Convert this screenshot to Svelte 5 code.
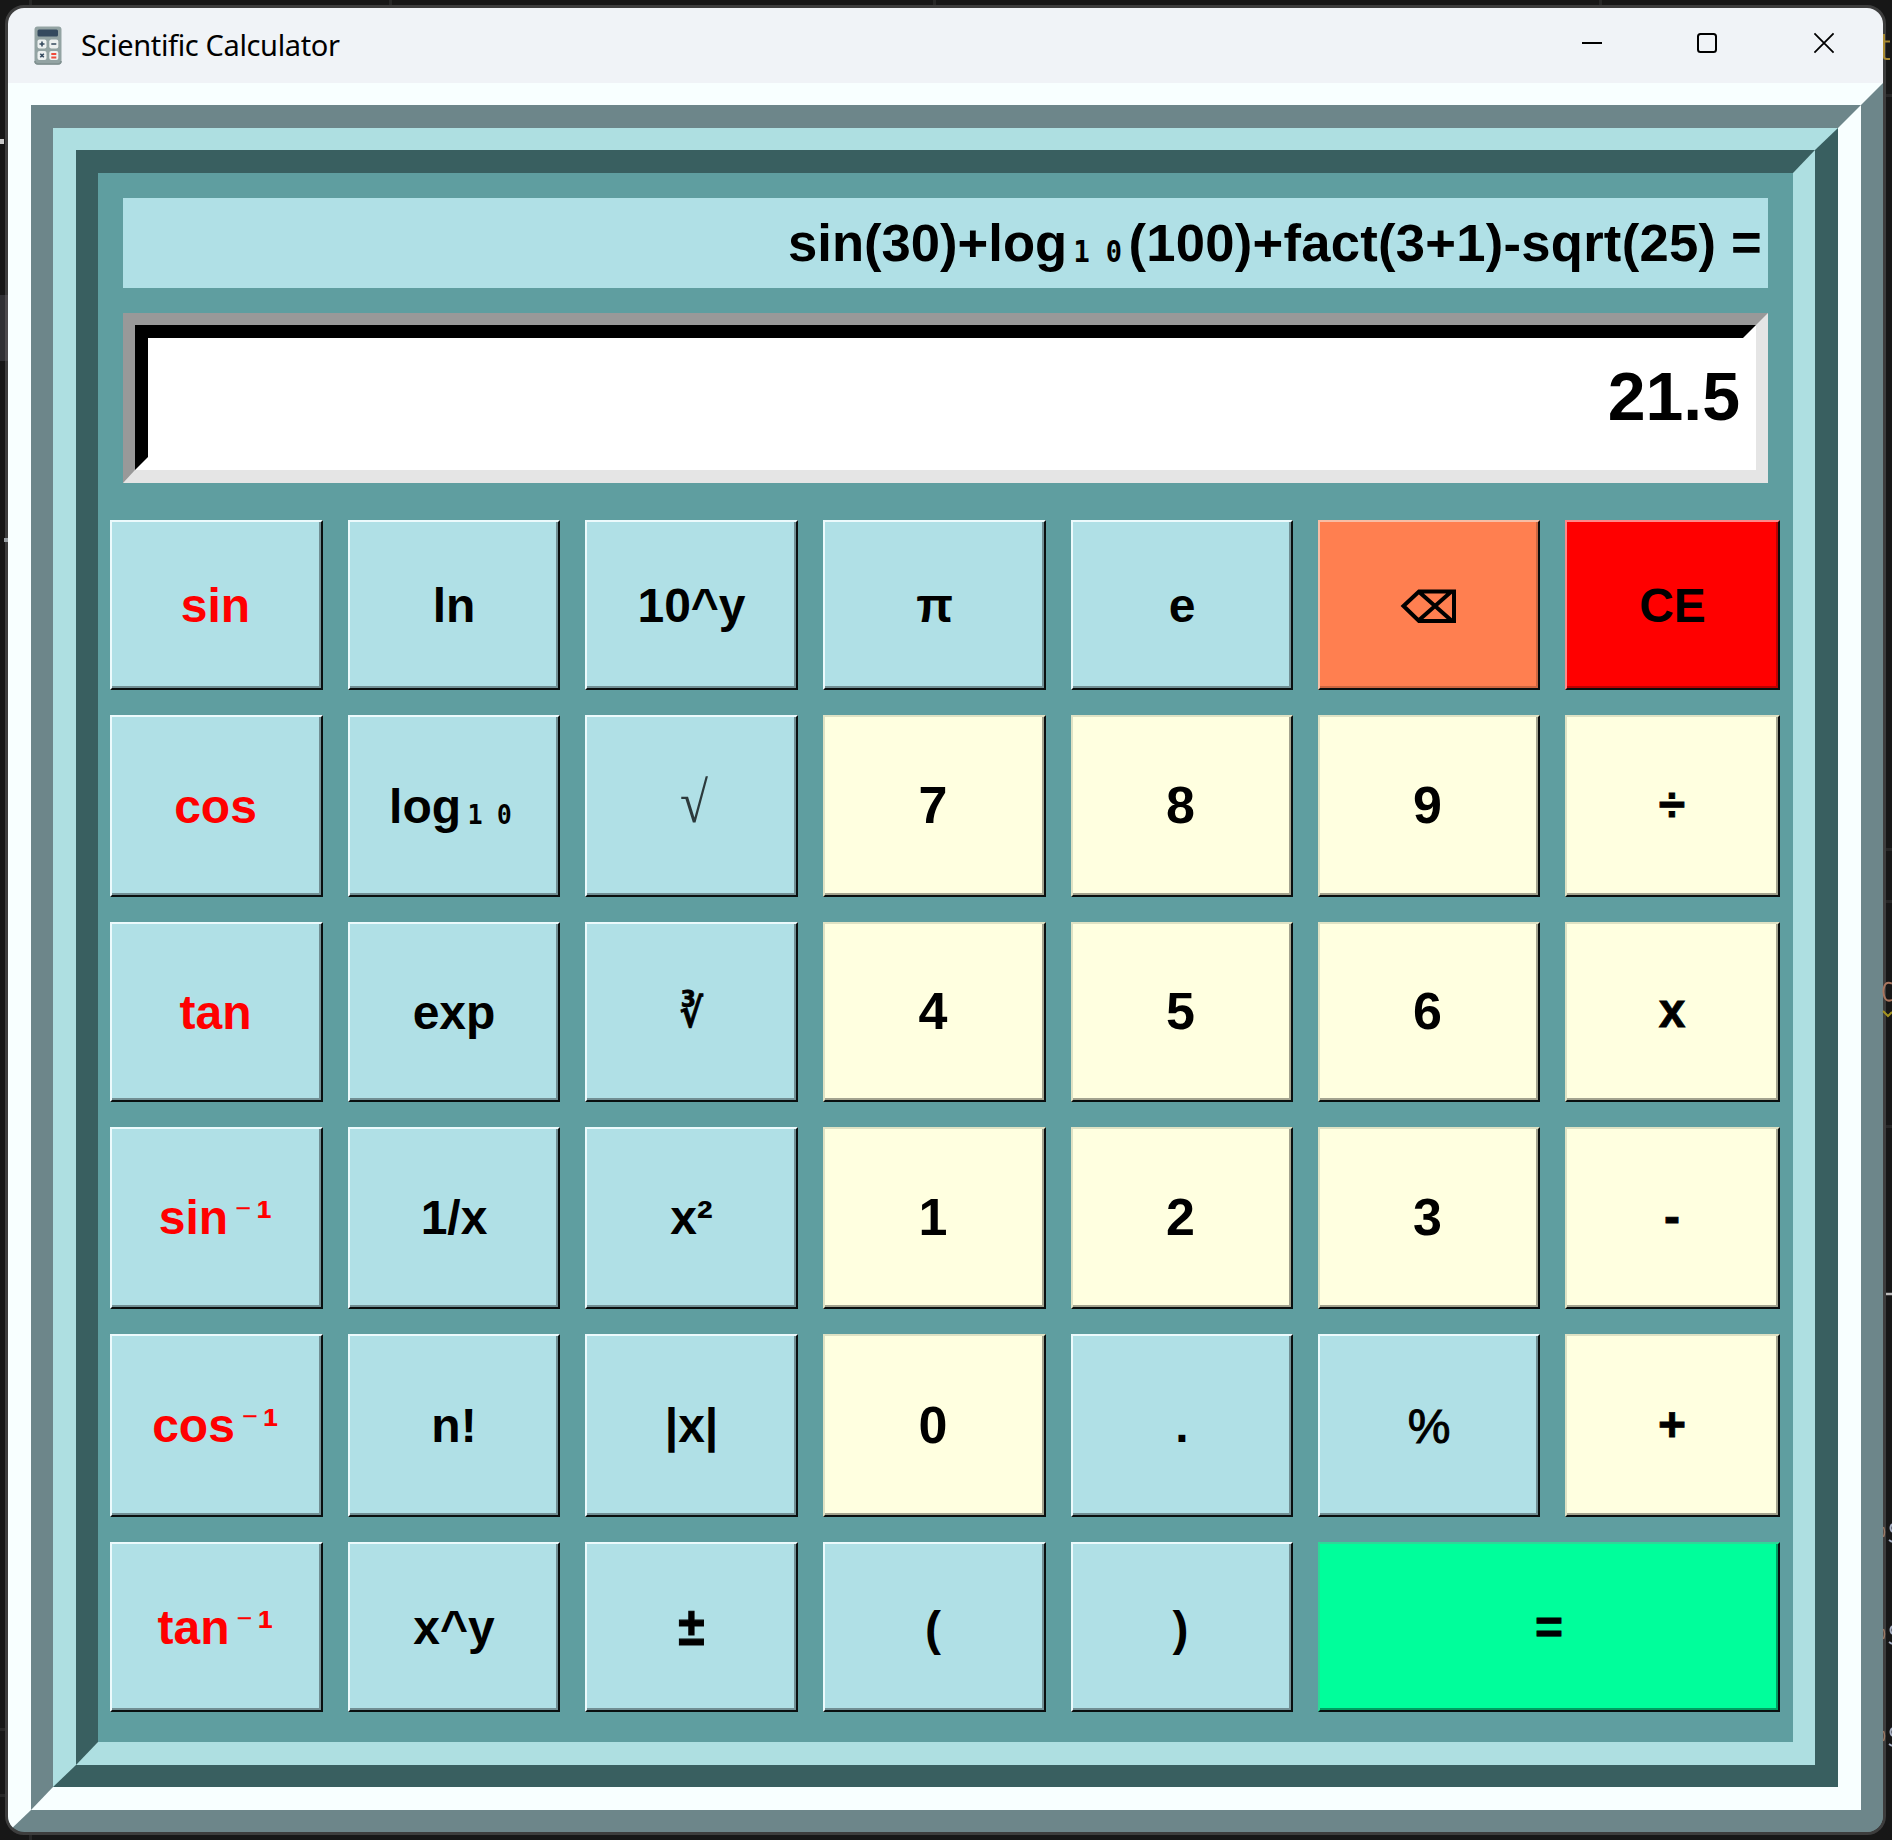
<script>
  const keys = [
    { t: 'sin', c: 'trig' }, { t: 'ln' }, { t: '10^y' }, { t: 'π' }, { t: 'e' }, { icon: true, c: 'back' }, { t: 'CE', c: 'clear' },
    { t: 'cos', c: 'trig' }, { t: 'log', sub: '₁₀' }, { t: '√', c: 'root' }, { t: '7', c: 'num' }, { t: '8', c: 'num' }, { t: '9', c: 'num' }, { t: '÷', c: 'num op' },
    { t: 'tan', c: 'trig' }, { t: 'exp' }, { t: '∛', c: 'cube' }, { t: '4', c: 'num' }, { t: '5', c: 'num' }, { t: '6', c: 'num' }, { t: 'x', c: 'num op' },
    { t: 'sin', inv: true, c: 'trig mid' }, { t: '1/x', c: 'mid' }, { t: 'x²', c: 'mid' }, { t: '1', c: 'num' }, { t: '2', c: 'num' }, { t: '3', c: 'num' }, { t: '-', c: 'num op' },
    { t: 'cos', inv: true, c: 'trig mid' }, { t: 'n!', c: 'mid' }, { t: '|x|', c: 'mid' }, { t: '0', c: 'num' }, { t: '.', c: 'mid' }, { t: '%', c: 'percent' }, { t: '+', c: 'num op' },
    { t: 'tan', inv: true, c: 'trig' }, { t: 'x^y' }, { t: '±', c: 'sign' }, { t: '(', c: 'paren' }, { t: ')', c: 'paren' }, { t: '=', c: 'equals' }
  ];
</script>

<div class="desktop">
  <main class="window">
    <header>
      <svg class="app-icon" width="28" height="39" viewBox="0 0 28 39">
        <rect x=".5" y=".5" width="27" height="38" rx="3" fill="#93a3a3" />
        <path d="M1 35q0 3 3 3h20q3 0 3-3" fill="none" stroke="#7f8f8f" stroke-width="1.5" />
        <rect x="3.5" y="3.5" width="20.5" height="7" rx="1.5" fill="#34495e" />
        <g fill="#edf1f1">
          <rect x="3.5" y="13.5" width="9" height="9" rx="2" /><rect x="15.3" y="13.5" width="9" height="9" rx="2" />
          <rect x="3.5" y="25" width="9" height="9" rx="2" /><rect x="15.3" y="25" width="9" height="9" rx="2" />
        </g>
        <path d="M5.5 18h5M8 15.5v5M17.3 18h5M6.3 27.7l3.5 3.5M9.8 27.7l-3.5 3.5" stroke="#34495e" stroke-width="1.6" />
        <path d="M17.3 28h5M17.3 31.5h5" stroke="#f04a3a" stroke-width="2.2" />
      </svg>
      <h1>Scientific Calculator</h1>
      <svg class="controls" width="252" height="22" viewBox="0 0 252 22" fill="none" stroke="#000" stroke-width="2">
        <path d="M0 11H20" />
        <rect x="116" y="2" width="18" height="18" rx="2.5" />
        <path d="M232.4 1.4l19.2 19.2M251.6 1.4l-19.2 19.2" stroke-width="1.8" />
      </svg>
    </header>
    <div class="ring r1"><div class="ring r2"><div class="ring r3"><div class="ring r4">
      <div class="body">
        <div class="expression">sin(30)+log<span class="mono"><i>₁</i><i>₀</i></span><span class="rest">(100)+fact(3+1)-sqrt(25) =</span></div>
        <div class="display"><div class="result">21.5</div></div>
        <div class="keys">
          {#each keys as k}
            <button class={k.c ?? ''}>
              {#if k.icon}
                <svg width="58" height="36" viewBox="0 0 58 36" fill="none" stroke="#000" stroke-width="4">
                  <path d="M3.500 18L19 3.500H54V33H19ZM18 3L52 33M52 3L18 33" />
                </svg>
              {:else}
                <span class="label">{k.t}{#if k.sub}<span class="mono">{#each k.sub as d}<i>{d}</i>{/each}</span>{/if}{#if k.inv}<span class="minus">⁻</span><span class="one">¹</span>{/if}</span>
              {/if}
            </button>
          {/each}
        </div>
      </div>
    </div></div></div></div>
  </main>
  <!-- editor window showing around the calculator's edges -->
  <svg class="editor" width="1892" height="1840" viewBox="0 0 1892 1840" fill="none">
    <path d="M30.5 0V5M390.5 0V5M934.5 0V5M1600.5 0V5M30.5 1835V1840M0 1729.5H5M0 1795.5H5M1886 95.5H1892M1886 849.5H1892M1886 901.5H1892M1886 1126.5H1892" stroke="#272727" stroke-width="3" />
    <rect x="0" y="295" width="5" height="66" fill="#303034" />
    <rect x="5" y="295" width="3" height="66" fill="#4c4a4d" />
    <rect x="0" y="139" width="4" height="5" fill="#c8c8c8" />
    <rect x="4" y="538" width="4" height="4" fill="#9aa0a4" />
    <path d="M1884 34V57Q1884 59 1887 59H1890M1884 41.5H1890" stroke="#a98a30" stroke-width="2" />
    <path d="M1892 983.500Q1884 980 1883.500 991.500Q1884 1003 1892 1000" stroke="#a9765f" stroke-width="2" />
    <path d="M1883 1011l5 5 4-4" stroke="#a3921f" stroke-width="2" />
    <path d="M1886 1294H1892" stroke="#bbb" stroke-width="2.5" />
    <g stroke="#a8b0c4" stroke-width="2">
      <path d="M1892 1524Q1889 1528 1892 1532M1889 1540L1892 1542" />
      <path d="M1892 1626Q1889 1630 1892 1634M1889 1642L1892 1644" />
      <path d="M1892 1728Q1889 1732 1892 1736M1889 1744L1892 1746" />
    </g>
    <path d="M1883.5 1527q2 5 0 10M1883.5 1629q2 5 0 10M1883.5 1731q2 5 0 10" stroke="#9a7a66" stroke-width="1.5" />
  </svg>
</div>

<style>
  .desktop {
    position: relative;
    box-sizing: border-box;
    width: 1892px;
    height: 1840px;
    padding: 5px;
    background: #171717;
    overflow: hidden;
    font-family: "Liberation Sans", Arial, sans-serif;
  }
  .editor { position: absolute; left: 0; top: 0; pointer-events: none; }
  .window {
    box-sizing: border-box;
    width: 1881px;
    height: 1830px;
    border: 3px solid #3d3d3d;
    border-radius: 19px;
    overflow: hidden;
    display: flex;
    flex-direction: column;
  }
  header {
    display: flex;
    align-items: center;
    height: 75px;
    flex: none;
    background: #f0f3f7;
    padding: 0 49px 0 26px;
  }
  .app-icon { margin-bottom: 1px; }
  h1 {
    margin: 0 0 1px 19px;
    font: 400 29px/40px "Noto Sans", "Open Sans", sans-serif;
    letter-spacing: -0.36px;
    color: #000;
    font-variant-ligatures: none;
  }
  .controls { margin: 0 0 5px auto; }
  .ring { flex: 1; display: flex; border-style: solid; }
  .r1 { border-width: 22px 22px 22px 23px; border-color: #f8ffff #6d868a #6d868a #f8ffff; }
  .r2 { border-width: 23px 23px 23px 22px; border-color: #6d868a #f8ffff #f8ffff #6d868a; }
  .r3 { border-width: 22px 23px 22px 23px; border-color: #aedfe1 #395f60 #395f60 #aedfe1; }
  .r4 { border-width: 23px 22px 23px 22px; border-color: #395f60 #aedfe1 #aedfe1 #395f60; }
  .body { flex: 1; background: #5f9ea0; padding: 25px 0 0; }
  .expression {
    box-sizing: border-box;
    height: 90px;
    margin: 0 25px;
    padding-right: 6px;
    background: #b0e0e6;
    text-align: right;
    font-weight: 700;
    font-size: 52.6px;
    line-height: 90px;
    white-space: pre;
  }
  .rest { letter-spacing: 0.25px; }
  .mono { font-family: "DejaVu Sans Mono", monospace; line-height: 0; }
  .mono i { display: inline-block; font-style: normal; transform: translateY(1px) scaleX(0.75); }
  .expression .mono { margin: 0 -1px; }
  .display {
    margin: 25px 25px 0;
    border: solid;
    border-width: 12px 12px 13px;
    border-color: #999 #e5e5e5 #e5e5e5 #999;
  }
  .result {
    box-sizing: border-box;
    height: 145px;
    border: 13px solid;
    border-color: #000 #fff #fff #000;
    background: #fff;
    padding-right: 3px;
    text-align: right;
    font-weight: 700;
    font-size: 68px;
    line-height: 117px;
  }
  .keys {
    display: grid;
    margin: 37px 0 0 12px;
    gap: 25px;
    grid-template-columns: 213px 212px 213px 223px 222px 222px 215px;
    grid-template-rows: 170px 182px 180px 182px 183px 170px;
  }
  button {
    --lit: #ecfafc;
    --dim: #718f94;
    display: flex;
    align-items: center;
    justify-content: center;
    margin: 0;
    padding: 2px 0 0;
    border: 2px solid;
    border-color: var(--lit) #0a0f0f #0a0f0f var(--lit);
    border-radius: 0;
    box-shadow: inset -2px -2px 0 var(--dim);
    background: #b0e0e6;
    color: #000;
    font: 700 48px/56px "Liberation Sans", Arial, sans-serif;
  }
  .label { white-space: pre; }
  .trig { color: #f00; padding-right: 2px; }
  .mid { padding-top: 0; }
  .num { --lit: #dfe2c4; --dim: #a3a38f; background: #ffffe0; font-size: 52px; line-height: 52px; padding: 0 3px 2px 0; }
  .op { font-size: 48px; padding-right: 1px; -webkit-text-stroke: 0.8px #000; }
  .back { --lit: #f8bda4; --dim: #cc6640; background: #ff7f50; }
  .clear { --lit: #f88; --dim: #b00; background: #f00; }
  .equals { --lit: #2ed898; --dim: #009d61; background: #00fe9b; grid-column: span 2; -webkit-text-stroke: 0.8px #000; }
  .paren { padding: 3px 3px 0 0; }
  .root { font-family: "Liberation Serif", serif; font-weight: 400; font-size: 58px; padding: 0 0 6px 4px; color: #2c3a3c; }
  .root .label { transform: scaleX(0.88); }
  .cube { font-family: "DejaVu Sans", sans-serif; font-size: 40px; -webkit-text-stroke: 0.8px #000; }
  .cube .label { transform: scaleX(0.88); }
  .percent { font-weight: 400; padding-top: 2px; -webkit-text-stroke: 1px #000; }
  .sign { -webkit-text-stroke: 1px #000; padding-top: 0; }
  .sign .label { transform: scaleY(1.1); }
  .minus {
    display: inline-block;
    width: 26px;
    margin-left: 2px;
    text-align: center;
    font-family: "DejaVu Sans", sans-serif;
    font-weight: 400;
    font-size: 32px;
    line-height: 0;
    transform: translateY(-9px);
    -webkit-text-stroke: 0.5px #f00;
  }
</style>
